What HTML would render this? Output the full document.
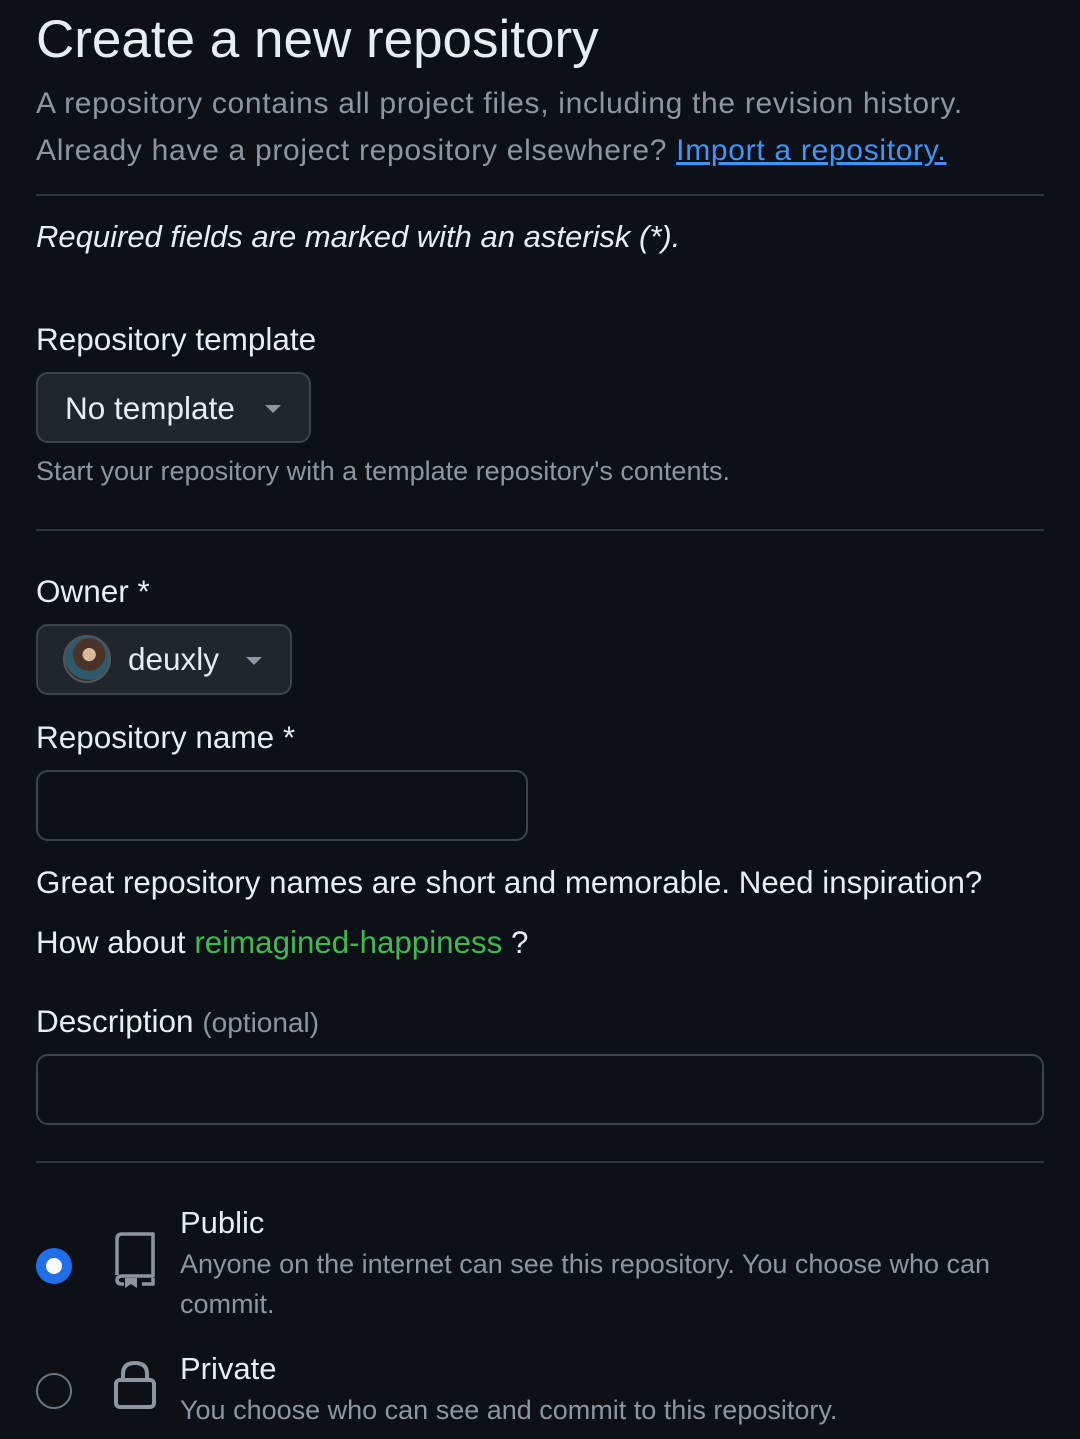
<!DOCTYPE html>
<html><head><meta charset="utf-8"><style>
*{margin:0;padding:0;box-sizing:border-box}
body{width:1080px;height:1439px;background:#0d1117;color:#e6edf3;font-family:"Liberation Sans",sans-serif;position:relative;overflow:hidden}
.a{position:absolute;white-space:nowrap}
.m{color:#8d96a0}
.hr{position:absolute;left:36px;width:1008px;height:2px;background:#30363d}
.btn{position:absolute;background:#21262d;border:2px solid #3d444d;border-radius:12px}
.inp{position:absolute;border:2px solid #3d444d;border-radius:12px;background:#0d1117}
.car{position:absolute;width:0;height:0;border-left:8px solid transparent;border-right:8px solid transparent;border-top:8px solid #8d96a0}
</style></head><body>
<div class="a" style="left:36px;top:9px;font-size:53px">Create a new repository</div>
<div class="a m" style="left:36px;top:87px;font-size:30px;letter-spacing:0.7px">A repository contains all project files, including the revision history.</div>
<div class="a m" style="left:36px;top:134px;font-size:30px;letter-spacing:0.7px">Already have a project repository elsewhere? <span style="color:#4493f8;text-decoration:underline">Import a repository.</span></div>
<div class="hr" style="top:194px"></div>
<div class="a" style="left:36px;top:219px;font-size:31px;font-style:italic">Required fields are marked with an asterisk (*).</div>
<div class="a" style="left:36px;top:321px;font-size:31.5px">Repository template</div>
<div class="btn" style="left:36px;top:372px;width:275px;height:71px"></div>
<div class="a" style="left:65px;top:390px;font-size:31.5px">No template</div>
<div class="car" style="left:265px;top:405px"></div>
<div class="a m" style="left:36px;top:456px;font-size:27px">Start your repository with a template repository's contents.</div>
<div class="hr" style="top:529px"></div>
<div class="a" style="left:36px;top:573px;font-size:31.5px">Owner *</div>
<div class="btn" style="left:36px;top:624px;width:256px;height:71px"></div>
<div style="position:absolute;left:63px;top:635px;width:48px;height:48px;border-radius:50%;background:radial-gradient(circle at 55% 40%,#d8b89a 0 18%,#4a3328 19% 45%,#2f5a6e 46% 70%,#3a2a24 71%);border:2px solid #555"></div>
<div class="a" style="left:128px;top:641px;font-size:31.5px">deuxly</div>
<div class="car" style="left:246px;top:657px"></div>
<div class="a" style="left:36px;top:719px;font-size:31.5px">Repository name *</div>
<div class="inp" style="left:36px;top:770px;width:492px;height:71px"></div>
<div class="a" style="left:36px;top:865px;font-size:31.3px">Great repository names are short and memorable. Need inspiration?</div>
<div class="a" style="left:36px;top:925px;font-size:31.3px">How about <span style="color:#3fb950">reimagined-happiness</span> ?</div>
<div class="a" style="left:36px;top:1003px;font-size:31.5px">Description <span class="m" style="font-size:28px">(optional)</span></div>
<div class="inp" style="left:36px;top:1054px;width:1008px;height:71px"></div>
<div class="hr" style="top:1161px"></div>
<div style="position:absolute;left:36px;top:1248px;width:36px;height:36px;border-radius:50%;background:#1f6feb;"><div style="position:absolute;left:10px;top:10px;width:16px;height:16px;border-radius:50%;background:#fff"></div></div>
<svg style="position:absolute;left:112px;top:1230px" width="48" height="58" viewBox="0 0 48 58" fill="none" stroke="#8d96a0" stroke-width="3.5" stroke-linejoin="round"><path d="M5 45V9Q5 4 10 4H41V46H11Q5 46 5 50Q5 54 10 54H12"/><path d="M30 54H41V48"/><path d="M13 48H25V58L19 54L13 58Z" fill="#8d96a0" stroke="none"/></svg>
<div class="a" style="left:180px;top:1205px;font-size:31px">Public</div>
<div class="a m" style="left:180px;top:1249px;font-size:27px">Anyone on the internet can see this repository. You choose who can</div>
<div class="a m" style="left:180px;top:1289px;font-size:27px">commit.</div>
<div style="position:absolute;left:36px;top:1373px;width:36px;height:36px;border-radius:50%;border:2px solid #6e7681"></div>
<svg style="position:absolute;left:112px;top:1360px" width="46" height="50" viewBox="0 0 46 50" fill="none" stroke="#8d96a0" stroke-width="4"><path d="M11 20V14Q11 3 23 3Q35 3 35 14V20"/><rect x="4" y="20" width="38" height="27" rx="4"/></svg>
<div class="a" style="left:180px;top:1351px;font-size:31px">Private</div>
<div class="a m" style="left:180px;top:1395px;font-size:27px">You choose who can see and commit to this repository.</div>
</body></html>
